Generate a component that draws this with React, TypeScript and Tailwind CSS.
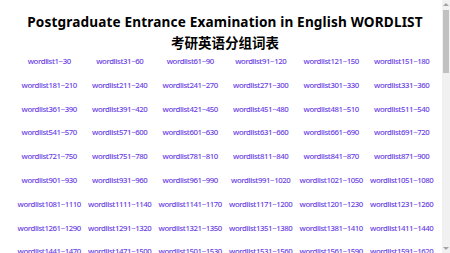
import React from "react"

const COLS = 6
const ROWS = 9

function ranges() {
    const out: { start: number; end: number }[] = []
    for (let i = 0; i < COLS * ROWS; i++) {
        out.push({ start: i * 30 + 1, end: i * 30 + 30 })
    }
    return out
}

function Scrollbar() {
    return (
        <div className="absolute right-0 top-0 flex h-[253px] w-[8px] flex-col items-center bg-[#f1f1f1]">
            <div className="mt-[3px] h-0 w-0 border-x-[3px] border-b-[3px] border-x-transparent border-b-[#a3a3a3]" />
            <div className="mt-[4px] h-[63px] w-[6px] bg-[#c1c1c1]" />
            <div className="flex-1" />
            <div className="mb-[3px] h-0 w-0 border-x-[3px] border-t-[3px] border-x-transparent border-t-[#a3a3a3]" />
        </div>
    )
}

export default function App() {
    return (
        <div className="relative h-[253px] w-[450px] overflow-hidden bg-white font-['Noto_Sans','Noto_Sans_CJK_SC',sans-serif]">
            <div className="pt-[12px] text-center font-bold text-black">
                <h1 className="text-[13.6px] leading-[20px] tracking-[0.15px]">Postgraduate Entrance Examination in English WORDLIST</h1>
                <h2 className="font-['Noto_Sans_CJK_SC',sans-serif] text-[13.5px] leading-[20px]">考研英语分组词表</h2>
            </div>
            <div className="ml-[14px] mt-[2px] grid w-[423px] grid-cols-6 gap-y-[9.8px]">
                {ranges().map((r) => (
                    <a
                        key={r.start}
                        href="#"
                        className="block text-center text-[7.8px] leading-[14px] tracking-[-0.4px] font-medium text-[#6a40e4] whitespace-nowrap"
                    >
                        wordlist{r.start}~{r.end}
                    </a>
                ))}
            </div>
            <Scrollbar />
        </div>
    )
}
